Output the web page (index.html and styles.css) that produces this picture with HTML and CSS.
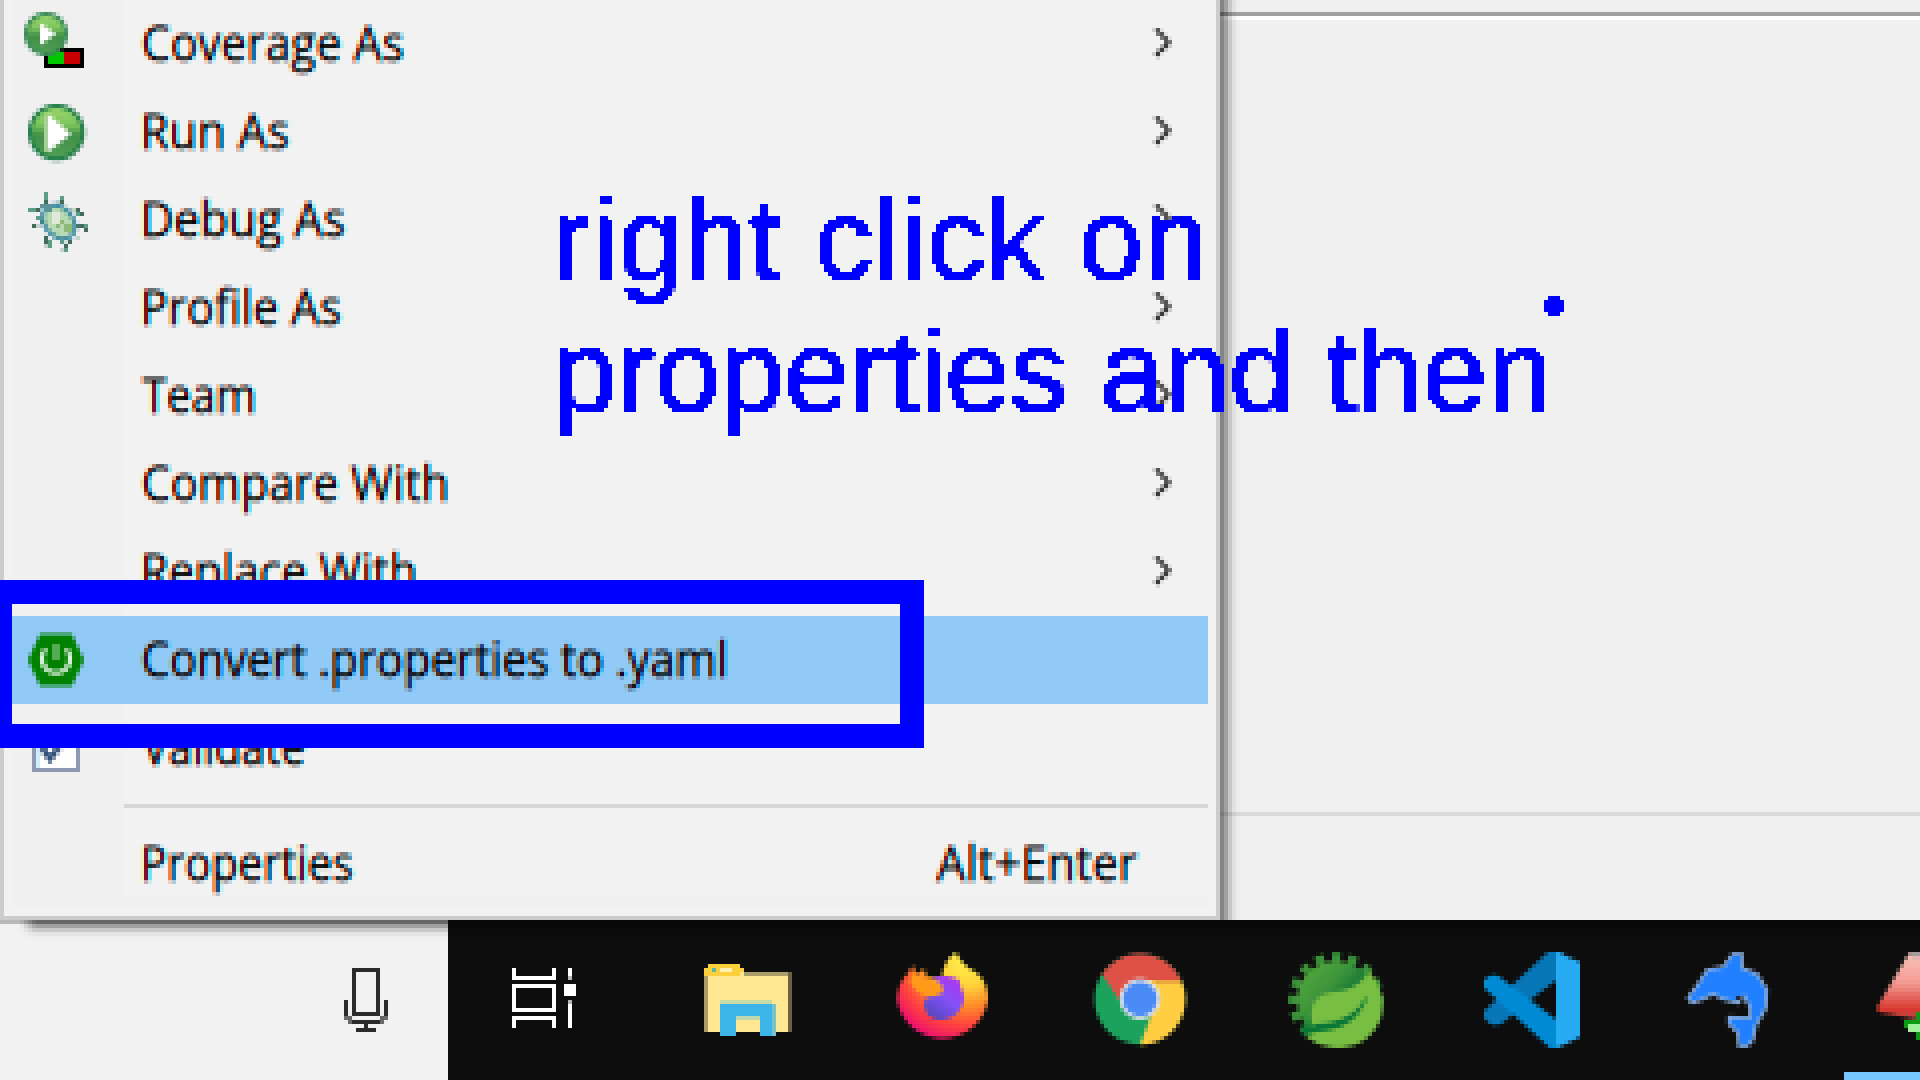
FILE: index.html
```html
<!DOCTYPE html>
<html lang="en">
<head>
<meta charset="utf-8">
<title>Context menu</title>
<link rel="stylesheet" href="styles.css">
</head>
<body>
<svg class="defs" width="0" height="0" aria-hidden="true">
  <defs>
    <!-- 4px mosaic: average each cell, keep one sample, spread it over the cell -->
    <filter id="mosaic" filterUnits="userSpaceOnUse" primitiveUnits="userSpaceOnUse" x="0" y="0" width="1920" height="1080" color-interpolation-filters="sRGB">
      <feConvolveMatrix in="SourceGraphic" order="4" targetX="0" targetY="0" edgeMode="duplicate" kernelMatrix="1 1 1 1 1 1 1 1 1 1 1 1 1 1 1 1" result="avg"/>
      <feFlood x="0" y="0" width="1" height="1" flood-color="#000" result="dot"/>
      <feOffset in="dot" dx="0" dy="0" x="0" y="0" width="4" height="4"/>
      <feTile result="grid"/>
      <feComposite in="avg" in2="grid" operator="in" result="a"/>
      <feOffset in="a" dx="1" dy="0" result="a1"/>
      <feComposite in="a" in2="a1" operator="over" result="b"/>
      <feOffset in="b" dx="2" dy="0" result="b1"/>
      <feComposite in="b" in2="b1" operator="over" result="c"/>
      <feOffset in="c" dx="0" dy="1" result="c1"/>
      <feComposite in="c" in2="c1" operator="over" result="d"/>
      <feOffset in="d" dx="0" dy="2" result="d1"/>
      <feComposite in="d" in2="d1" operator="over"/>
    </filter>
    <filter id="mosaic-hard" filterUnits="userSpaceOnUse" primitiveUnits="userSpaceOnUse" x="0" y="0" width="1920" height="1080" color-interpolation-filters="sRGB">
      <feConvolveMatrix in="SourceGraphic" order="4" targetX="0" targetY="0" edgeMode="duplicate" kernelMatrix="1 1 1 1 1 1 1 1 1 1 1 1 1 1 1 1" result="avg"/>
      <feFlood x="0" y="0" width="1" height="1" flood-color="#000" result="dot"/>
      <feOffset in="dot" dx="0" dy="0" x="0" y="0" width="4" height="4"/>
      <feTile result="grid"/>
      <feComposite in="avg" in2="grid" operator="in" result="a"/>
      <feOffset in="a" dx="1" dy="0" result="a1"/>
      <feComposite in="a" in2="a1" operator="over" result="b"/>
      <feOffset in="b" dx="2" dy="0" result="b1"/>
      <feComposite in="b" in2="b1" operator="over" result="c"/>
      <feOffset in="c" dx="0" dy="1" result="c1"/>
      <feComposite in="c" in2="c1" operator="over" result="d"/>
      <feOffset in="d" dx="0" dy="2" result="d1"/>
      <feComposite in="d" in2="d1" operator="over"/>
      <feColorMatrix type="matrix" values="0 0 0 0 0  0 0 0 0 0  0 0 0 0 1  0 0 0 1 0"/>
      <feComponentTransfer><feFuncA type="linear" slope="60" intercept="-28"/></feComponentTransfer>
    </filter>
    <!-- subpixel colour fringes of the menu text -->
    <filter id="fringe" x="-5%" y="-5%" width="110%" height="110%" color-interpolation-filters="sRGB">
      <feOffset in="SourceAlpha" dx="1.5" dy="0" result="ra"/>
      <feOffset in="SourceAlpha" dx="-1.5" dy="0" result="ba"/>
      <feFlood flood-color="#0ff"/><feComposite in2="ra" operator="in" result="r"/>
      <feFlood flood-color="#f0f"/><feComposite in2="SourceAlpha" operator="in" result="g"/>
      <feFlood flood-color="#ff0"/><feComposite in2="ba" operator="in" result="b"/>
      <feBlend in="r" in2="g" mode="multiply" result="rg"/>
      <feBlend in="rg" in2="b" mode="multiply"/>
    </filter>
    <linearGradient id="green" x1="0" y1="0" x2="0" y2="1">
      <stop offset="0" stop-color="#9bd86c"/><stop offset=".35" stop-color="#7fc45e"/><stop offset=".55" stop-color="#418f48"/><stop offset="1" stop-color="#52a055"/>
    </linearGradient>
    <symbol id="chevron" viewBox="0 0 5 8">
      <path fill="#cccccc" d="M0 0h1v1H0zM4 4h1v1H4zM3 5h1v1H3zM0 6h1v1H0z"/>
      <path fill="#555555" d="M1 0h1v1H1zM2 1h1v1H2zM3 2h1v2H3z"/>
      <path fill="#777777" d="M1 1h1v1H1zM2 2h1v1H2zM4 3h1v1H4z"/>
      <path fill="#3c3c3c" d="M3 4h1v1H3zM2 5h1v1H2zM1 6h1v1H1z"/>
      <path fill="#aaaaaa" d="M2 4h1v1H2zM1 5h1v1H1z"/>
      <path fill="#e2e2e2" d="M2 0h1v1H2zM3 1h1v1H3zM4 2h1v1H4zM2 6h1v1H2z"/>
      <path fill="#d6d6d6" d="M1 7h1v1H1z"/>
    </symbol>
  </defs>
</svg>

<div class="screen">
  <div class="workspace">
    <div class="menu">
      <div class="row">
        <svg class="gutter" viewBox="12 0 112 88">
          <rect x="44" y="48" width="40" height="20" fill="#000"/>
          <rect x="48" y="52" width="16" height="12" fill="#00c800"/><rect x="64" y="52" width="16" height="12" fill="#c80000"/>
          <circle cx="46" cy="34" r="20" fill="url(#green)" stroke="#3b8a55" stroke-width="4"/>
          <path d="M40 23v22l16-11z" fill="#fff"/>
        </svg>
        <svg class="label" height="88"><text x="17" y="60.500" textLength="263" lengthAdjust="spacingAndGlyphs">Coverage As</text></svg>
        <svg class="chev"><use href="#chevron"/></svg>
      </div>
      <div class="row">
        <svg class="gutter" viewBox="12 88 112 88">
          <circle cx="56.500" cy="132.500" r="26.500" fill="url(#green)" stroke="#237d49" stroke-width="4"/>
          <path d="M44 114v38l5-1V115z" fill="#a9d098"/><path d="M48 114v38l23-18z" fill="#fff"/>
        </svg>
        <svg class="label" height="88"><text x="16" y="60.500" textLength="149" lengthAdjust="spacingAndGlyphs">Run As</text></svg>
        <svg class="chev"><use href="#chevron"/></svg>
      </div>
      <div class="row">
        <svg class="gutter" viewBox="12 176 112 88">
          <g transform="translate(28 192) scale(4)">
            <path fill="#5b9e86" d="M4 0h1v2H4zM8 1h1v1H8zM0 4h2v1H0zM12 4h0v1h2v1h-2zM1 8h1v1H1zM2 6h1v1H2zM5 12h1v2H5zM8 11h1v2H8zM9 14h1v1H9zM14 8h1v1h-1z"/>
            <path fill="#426c59" d="M4 2h1v1H4zM8 2h1v1H8zM2 4h1v1H2zM12 4h1v1h-1zM13 5h1v1h-1zM3 7h1v1H3zM1 8h1v1H1zM12 8h2v1h-2zM14 9h1v1h-1zM4 11h1v2H4zM9 13h1v1H9zM10 12h1v1h-1z"/>
            <path fill="#c3d2ca" d="M7 2h1v1H7zM10 4h2v1h-2zM3 6h1v1H3zM2 8h1v1H2zM8 14h1v1H8zM12 11h1v1h-1zM4 13h1v1H4z"/>
            <ellipse cx="7.700" cy="7.500" rx="4.700" ry="3.500" transform="rotate(48 7.700 7.500)" fill="#b9d9b2" stroke="#3e8aa2" stroke-width="1"/>
            <path fill="#5a9498" d="M3 3h3v1H3zM4 4h2v1H4z"/>
            <path fill="#deebda" d="M6 5h2v3H6z"/><path fill="#8dbb77" d="M7 8h1v1H7zM9 8h2v2H9zM8 7h1v1H8z"/>
          </g>
        </svg>
        <svg class="label" height="88"><text x="16" y="60.500" textLength="205" lengthAdjust="spacingAndGlyphs">Debug As</text></svg>
        <svg class="chev"><use href="#chevron"/></svg>
      </div>
      <div class="row">
        <span class="gutter"></span>
        <svg class="label" height="88"><text x="16" y="60.500" textLength="201" lengthAdjust="spacingAndGlyphs">Profile As</text></svg>
        <svg class="chev"><use href="#chevron"/></svg>
      </div>
      <div class="row">
        <span class="gutter"></span>
        <svg class="label" height="88"><text x="18" y="60.500" textLength="114" lengthAdjust="spacingAndGlyphs">Team</text></svg>
        <svg class="chev"><use href="#chevron"/></svg>
      </div>
      <div class="row">
        <span class="gutter"></span>
        <svg class="label" height="88"><text x="17" y="60.500" textLength="308" lengthAdjust="spacingAndGlyphs">Compare With</text></svg>
        <svg class="chev"><use href="#chevron"/></svg>
      </div>
      <div class="row">
        <span class="gutter"></span>
        <svg class="label" height="88"><text x="16" y="60.500" textLength="277" lengthAdjust="spacingAndGlyphs">Replace With</text></svg>
        <svg class="chev"><use href="#chevron"/></svg>
      </div>
      <div class="row selected">
        <svg class="gutter" viewBox="12 616 112 88">
          <path d="M40 634h32l12 26-12 26H40L28 660z" fill="#008200"/>
          <path d="M46 649a14 14 0 1 0 20 0" fill="none" stroke="#dcefdc" stroke-width="4.500"/>
          <rect x="54" y="644" width="4" height="16" fill="#a8d4a8"/>
        </svg>
        <svg class="label" height="88"><text x="17" y="60.500" textLength="587" lengthAdjust="spacingAndGlyphs">Convert .properties to .yaml</text></svg>
      </div>
      <div class="row">
        <svg class="gutter" viewBox="12 704 112 88">
          <rect x="34" y="726" width="44" height="44" fill="#fff" stroke="#8e99b3" stroke-width="4"/>
          <rect x="36" y="728" width="4" height="40" fill="#cfeffb"/>
          <path d="M40 744l10 15 14-19" fill="none" stroke="#35517b" stroke-width="6"/>
        </svg>
        <svg class="label" height="88"><text x="18" y="60.500" textLength="163" lengthAdjust="spacingAndGlyphs">Validate</text></svg>
      </div>
      <div class="divider"><span></span></div>
      <div class="row last">
        <span class="gutter"></span>
        <svg class="label" height="76"><text x="16" y="60.500" textLength="213" lengthAdjust="spacingAndGlyphs">Properties</text></svg>
        <svg class="label shortcut" height="76"><text x="0" y="60.500" textLength="201" lengthAdjust="spacingAndGlyphs">Alt+Enter</text></svg>
      </div>
      <div class="foot"></div>
    </div>
    <div class="pane"><div class="pane-top"></div><div class="pane-bottom"></div><div class="shade"></div></div>
  </div>

  <div class="taskbar">
    <div class="search">
      <div class="under-shadow"></div>
      <svg class="mic" viewBox="340 964 52 72">
        <path fill="none" stroke="#2b2b2b" stroke-width="4" d="M354 970h24v44h-24zM346 1000v16l6 6h28l6-6v-16M366 1022v8M356 1030h20"/>
      </svg>
    </div>
    <div class="apps">
      <div class="slot"><svg class="icon" viewBox="0 0 96 96">
        <path fill="none" stroke="#fff" stroke-width="4" d="M10 16v10h40V16M10 34h40v24H10zM10 76V66h40v10M66 16v10M66 50v26"/>
        <rect x="60" y="32" width="12" height="12" fill="#fff"/><path fill="#b8b8b8" d="M64 24h4v4h-4zM64 48h4v4h-4z"/>
      </svg></div>
      <div class="slot"><svg class="icon" viewBox="0 0 96 96">
        <rect x="4" y="20" width="84" height="60" fill="#ffe691"/>
        <path fill="#a99c6a" d="M44 20h44v4H44zM4 24h4v56H4z"/><path fill="#6b6040" d="M88 20h4v60h-4z"/>
        <path fill="#fbd03c" d="M8 12h32v4h4v4h-4v4H4V16h4z"/><rect x="20" y="16" width="12" height="4" fill="#fff0b8"/><rect x="12" y="16" width="4" height="4" fill="#5bbba7"/>
        <rect x="20" y="48" width="52" height="4" fill="#c9dca8"/>
        <path fill="#3cb4e7" d="M20 52h52v32H60V64H36v20H20z"/><path fill="#73c4cb" d="M72 52h4v32h-4z"/><path fill="#bcd7b0" d="M36 64h24v4H36z"/>
      </svg></div>
      <div class="slot"><svg class="icon" viewBox="0 0 96 96">
        <defs>
          <radialGradient id="ff" gradientUnits="userSpaceOnUse" cx="70" cy="5" r="96"><stop offset="0" stop-color="#fff34c"/><stop offset=".3" stop-color="#ffd43c"/><stop offset=".52" stop-color="#ff8a28"/><stop offset=".72" stop-color="#ff4040"/><stop offset=".93" stop-color="#ea0c72"/></radialGradient>
          <linearGradient id="globe" x1=".8" y1="0" x2=".2" y2="1"><stop offset="0" stop-color="#b234ec"/><stop offset=".5" stop-color="#8450f8"/><stop offset="1" stop-color="#4e46b4"/></linearGradient>
        </defs>
        <path fill="url(#ff)" d="M17 13L20 22L28 17L32 27Q38 24 46 24Q48 8 60 0Q66 13 78 19Q92 28 92 48A46 45 0 0 1 1 48Q1 32 12 21z"/>
        <path fill="url(#globe)" d="M36 26q14-5 27 2l2 8q6 10 0 20-8 13-22 12-14-2-15-16 1-8 10-10l9-3q0-8-11-13z"/>
        <path fill="#ff9b18" d="M14 30l4-10 10 8 6-4q4 6 13 11 1 4-2 7l-10 3q-14-2-21-15z"/>
      </svg></div>
      <div class="slot"><svg class="icon" viewBox="0 0 96 96">
        <circle cx="48" cy="47" r="45.500" fill="#1ba35d"/>
        <path fill="#df5146" d="M10 22a45.500 45.500 0 0 1 79 6H48v20l-20 1z"/>
        <path fill="#ffce43" d="M48 28h41a45.500 45.500 0 0 1-41 65l14-37z"/><path fill="#e9a93c" d="M61 28h28l1 4H63z"/>
        <circle cx="48" cy="47" r="20.500" fill="#dfe3e8"/><circle cx="48" cy="47" r="17" fill="#4b8bf5"/>
      </svg></div>
      <div class="slot"><svg class="icon" viewBox="0 0 96 96">
        <defs><linearGradient id="gear" gradientUnits="userSpaceOnUse" x1="14" y1="14" x2="62" y2="58"><stop offset="0" stop-color="#54a83a"/><stop offset=".5" stop-color="#3f963b"/><stop offset="1" stop-color="#026b35"/></linearGradient></defs>
        <circle cx="48" cy="48" r="39" fill="url(#gear)"/>
        <circle cx="48" cy="48" r="43" fill="none" stroke="#3c943b" stroke-width="9" stroke-dasharray="9 7.890" stroke-dashoffset="4.500" transform="rotate(-90 48 48)"/>
        <path fill="#78be43" d="M81 19C99 40 101 68 78 87C58 101 34 97 17 84Q22 82 26 78Q22 68 24 56Q28 42 46 40Q70 38 81 19z"/>
        <path fill="#0b7737" d="M15 70L21 76L28 72Q66 70 78 44Q80 48 74 56Q62 78 28 80L18 84L13 80z"/>
      </svg></div>
      <div class="slot"><svg class="icon" viewBox="0 0 96 96">
        <path fill="#0877b8" d="M64 0h10v27L46 48 20 70q-8 6-15 1l-5-5v-7z"/>
        <path fill="#008bd4" d="M0 28q8-8 16-3l58 44v27H66L0 36z"/>
        <path fill="#27abf2" d="M72 0q6 0 10 4l14 6v75L80 93l-8 3z"/>
      </svg></div>
      <div class="slot"><svg class="icon" viewBox="0 0 96 96">
        <path fill="#2080ff" stroke="#8bacd9" stroke-width="3" d="M8 46L17 34 27 18 43 15 53 2H62V16L77 22 87 38 86 56 76 73 73 88 67 94H59L58 81 49 72V65L70 66V55L64 44 58 51 43 47 33 42 23 47 12 51z"/>
        <rect x="56" y="44" width="6" height="4" fill="#222b3a"/>
      </svg></div>
      <div class="slot active"><svg class="icon" viewBox="0 0 96 96">
        <defs><linearGradient id="red" x1="0" y1="0" x2="0" y2="1"><stop offset="0" stop-color="#fcc4bb"/><stop offset=".45" stop-color="#f19a92"/><stop offset=".85" stop-color="#d9352b"/><stop offset="1" stop-color="#a65353"/></linearGradient></defs>
        <path fill="url(#red)" d="M1 55L33 1H63L96 55 44 68 2 60z"/><path fill="#a39d99" d="M35 0h20v5H35z"/>
        <path fill="#0b9b12" d="M40 60h16v8h12v12H56v12H44v-4h-4v-8h-4v-4h-8V68h12z"/><path fill="#9ef29a" d="M32 72h12v-4h8v16h-8v-4H32z"/>
      </svg><span class="indicator"></span></div>
    </div>
  </div>
</div>

<div class="markup">
  <div class="frame"></div>
  <div class="note"><span class="wide">right click on</span><br>properties and then</div>
  <div class="dot"></div>
</div>
</body>
</html>
```
FILE: styles.css
```css
* { box-sizing: border-box; }
body {
  margin: 0;
  width: 1920px;
  height: 1080px;
  overflow: hidden;
  position: relative;
  background: #f0f0f0;
}
.defs { position: absolute; }
.screen {
  width: 1920px;
  height: 1080px;
  overflow: hidden;
  display: flex;
  flex-direction: column;
  background: #f0f0f0;
  filter: url(#mosaic);
}
.workspace { display: flex; height: 920px; }

.menu {
  width: 1220px;
  height: 920px;
  padding: 0 8px 8px;
  border: 4px solid #cccccc;
  border-top: 0;
  background: #f2f2f2;
}
.row { display: flex; height: 88px; }
.row.last { height: 76px; }
.gutter { display: block; flex: none; width: 112px; height: 100%; background: #f0f0f0; }
.selected, .selected .gutter { background: #91c9f7; }
.label {
  display: block;
  flex: 1;
  min-width: 0;
  overflow: visible;
  font-family: "Open Sans", "Noto Sans", sans-serif;
  font-size: 49px;
  fill: #000;
  stroke: #000;
  stroke-width: 0.6px;
  mix-blend-mode: multiply;
}
.label text { filter: url(#fringe); }
.shortcut { flex: 0 0 272px; }
.chev { flex: none; width: 20px; height: 32px; margin: 28px 36px 0 0; }
.divider { display: flex; height: 28px; padding-left: 112px; background: linear-gradient(to right, #f0f0f0 112px, transparent 112px); }
.divider span { flex: 1; height: 4px; margin-top: 12px; background: #d7d7d7; }
.foot { height: 12px; background: #f0f0f0; }

.pane { flex: 1; display: flex; flex-direction: column; justify-content: space-between; position: relative; padding: 12px 0 104px; }
.pane-top { height: 8px; border-top: 4px solid #a0a0a0; background: #fff; }
.pane-bottom { height: 4px; background: #dadada; }
.shade {
  position: absolute;
  inset: 0 auto 0 0;
  width: 20px;
  mix-blend-mode: multiply;
  background: linear-gradient(to right, #8c8c8c 4px, #ababab 4px 8px, #d4d4d4 8px 12px, #f0f0f0 12px 16px, #fcfcfc 16px);
}

.taskbar { display: flex; height: 160px; background: #0c0d0c; }
.search { width: 448px; flex: none; background: #f2f2f2; display: flex; flex-direction: column; }
.under-shadow {
  height: 20px;
  background:
    linear-gradient(to right, #f2f2f2 20px, #f2f2f200 36px) 0 4px no-repeat,
    linear-gradient(to right, #b8b8b8 20px, #b8b8b800 36px) 0 0 / 100% 4px no-repeat,
    linear-gradient(to bottom, #666666 4px, #a0a0a0 4px 8px, #c8c8c8 8px 12px, #e4e4e4 12px 16px, #efefef 16px);
}
.mic { width: 52px; height: 72px; margin: 24px 0 0 340px; }
.apps { flex: 1; min-width: 0; display: flex; padding-left: 6px; overflow: hidden; background: linear-gradient(#060706, #0c0d0c 16px); }
.slot { flex: 0 0 196px; display: flex; align-items: center; justify-content: center; position: relative; }
.icon { width: 96px; height: 96px; }
.indicator { position: absolute; left: 18px; right: 0; bottom: 0; height: 8px; background: #76c7ff; }

.markup { position: absolute; inset: 0; filter: url(#mosaic-hard); }
.frame { position: absolute; left: -12px; top: 580px; width: 936px; height: 168px; border: 24px solid #0000ff; }
.note {
  position: absolute;
  left: 552px;
  top: 174px;
  font: 116px/132px "Liberation Sans", Arial, sans-serif;
  color: #0000ff;
  -webkit-text-stroke: 1.6px #0000ff;
  white-space: nowrap;
}
.wide { letter-spacing: 0.9px; }
.dot {
  position: absolute;
  left: 1544px;
  top: 296px;
  width: 20px;
  height: 20px;
  border-radius: 8px;
  background: #0000ff;
}
```
